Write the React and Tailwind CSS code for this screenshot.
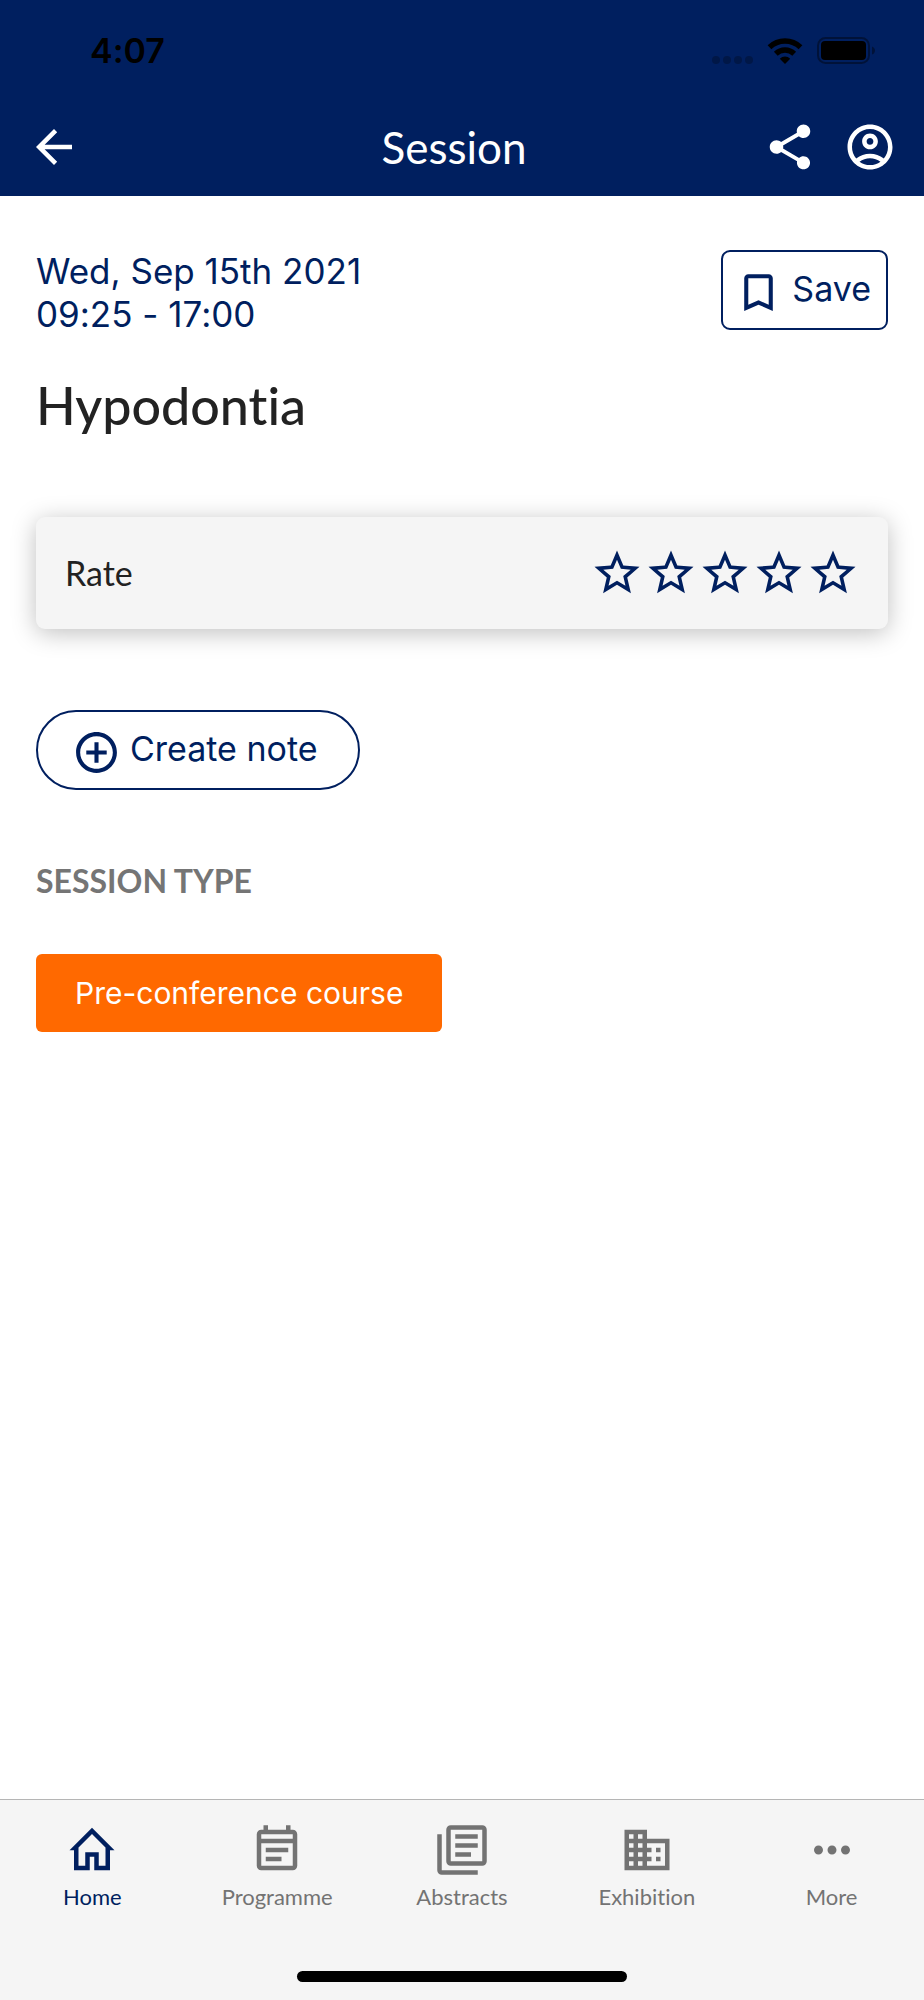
import { useState } from "react";
import {
  MdAddCircleOutline,
  MdArrowBack,
  MdBookmarkBorder,
  MdDomain,
  MdMoreHoriz,
  MdOutlineAccountCircle,
  MdOutlineEventNote,
  MdShare,
} from "react-icons/md";

function HomeIcon({ className }) {
  return (
    <svg className={className} viewBox="0 0 24 24" fill="currentColor" fillRule="evenodd">
      <path d="M12 2.1L2 12.1H4V21H11V15H13V21H20V12.1H22L12 2.1ZM12 4.9L18 10.9V19H15V13H9V19H6V10.9L12 4.9Z" />
    </svg>
  );
}

function AbstractsIcon({ className }) {
  return (
    <svg className={className} viewBox="0 0 24 24" fill="currentColor">
      <path d="M16 15H9V13H16V15M19 11H9V9H19V11M19 7H9V5H19V7M3 5V21H19V23H3A2 2 0 0 1 1 21V5H3M21 1A2 2 0 0 1 23 3V17C23 18.11 22.11 19 21 19H7A2 2 0 0 1 5 17V3C5 1.89 5.89 1 7 1H21M7 3V17H21V3H7Z" />
    </svg>
  );
}

function StarIcon({ className }) {
  return (
    <svg className={className} viewBox="0 0 24 24" fill="currentColor">
      <path d="M12 15.39L8.24 17.66L9.23 13.38L5.91 10.5L10.29 10.13L12 6.09L13.71 10.13L18.09 10.5L14.77 13.38L15.76 17.66M22 9.24L14.81 8.63L12 2L9.19 8.63L2 9.24L7.45 13.97L5.82 21L12 17.27L18.18 21L16.54 13.97L22 9.24Z" />
    </svg>
  );
}

const tabs = [
  { label: "Home", icon: HomeIcon },
  { label: "Programme", icon: MdOutlineEventNote },
  { label: "Abstracts", icon: AbstractsIcon },
  { label: "Exhibition", icon: MdDomain },
  { label: "More", icon: MdMoreHoriz },
];

function StatusBar() {
  return (
    <div className="h-[98px] pt-1 flex items-center justify-between pl-[90px] pr-12 text-black">
      <span className="font-['Inter',sans-serif] font-semibold text-[34px] leading-[48px]">4:07</span>
      <div className="flex items-center">
        <svg className="w-[42px] h-[26px]" viewBox="0 0 42 26" fill="#000000" fillOpacity="0.25">
          <circle cx="4" cy="22" r="4" />
          <circle cx="15" cy="22" r="4" />
          <circle cx="26" cy="22" r="4" />
          <circle cx="37" cy="22" r="4" />
        </svg>
        <svg className="ml-[13px] w-9 h-[26px]" viewBox="0 0 36 26" fill="none" stroke="#000000">
          <path d="M2.5 9.2A22.3 22.3 0 0 1 33.5 9.2" strokeWidth="5.4" />
          <path d="M8.8 15.8A13.2 13.2 0 0 1 27.2 15.8" strokeWidth="5.4" />
          <path d="M18 26L12.8 20.7A7.4 7.4 0 0 1 23.2 20.7Z" fill="#000000" stroke="none" />
        </svg>
        <svg className="ml-[14px] w-[59px] h-[28px]" viewBox="0 0 59 28">
          <rect x="1" y="1" width="51" height="25" rx="7.5" fill="none" stroke="#000000" strokeOpacity="0.4" strokeWidth="2" />
          <rect x="4" y="4" width="45" height="19" rx="4" fill="#000000" />
          <path d="M55 9.5C57 10 58 12 58 13.5S57 17 55 17.5Z" fill="#000000" fillOpacity="0.4" />
        </svg>
      </div>
    </div>
  );
}

function Header() {
  return (
    <header className="bg-[#001f5f]">
      <StatusBar />
      <div className="h-[98px] grid grid-cols-3 items-center px-[27px] text-white">
        <button aria-label="Back" className="justify-self-start">
          <MdArrowBack className="w-[54px] h-[54px]" />
        </button>
        <h1 className="pr-4 text-center text-[44px] leading-[54px]">Session</h1>
        <div className="justify-self-end flex gap-[26px]">
          <button aria-label="Share">
            <MdShare className="w-[54px] h-[54px]" />
          </button>
          <button aria-label="Account">
            <MdOutlineAccountCircle className="w-[54px] h-[54px]" />
          </button>
        </div>
      </div>
    </header>
  );
}

function RateCard() {
  const [, setRating] = useState(0);
  return (
    <section className="mt-[78px] h-28 flex items-center justify-between pl-[29px] pr-7 rounded-[9px] bg-[#f5f5f5] shadow-[0_4px_24px_rgba(0,0,0,0.25)]">
      <h3 className="text-[34px] leading-[44px]">Rate</h3>
      <div className="flex text-[#001f5f]">
        {[1, 2, 3, 4, 5].map((n) => (
          <button key={n} aria-label={`Rate ${n}`} onClick={() => setRating(n)}>
            <StarIcon className="w-[54px] h-[54px]" />
          </button>
        ))}
      </div>
    </section>
  );
}

function TabBar() {
  return (
    <nav className="border-t border-[#b5b5b5] bg-[#f5f5f5] pt-[23px] pb-[18px]">
      <div className="grid grid-cols-5">
        {tabs.map(({ label, icon: TabIcon }) => (
          <a
            key={label}
            href="#"
            className={`flex flex-col items-center gap-[6px] text-[22px] leading-[28px] ${label === "Home" ? "text-[#001f5f]" : "text-[#737373]"}`}
          >
            <TabIcon className="w-[54px] h-[54px]" />
            {label}
          </a>
        ))}
      </div>
      <div className="mx-auto mt-[60px] w-[330px] h-[11px] rounded-full bg-black" />
    </nav>
  );
}

export default function App() {
  return (
    <div className="min-h-screen flex flex-col bg-white font-['Lato',sans-serif] [font-variant-ligatures:none] text-[#222222]">
      <Header />
      <main className="flex-1 px-9 pt-[54px]">
        <div className="flex items-start justify-between font-['Inter',sans-serif] leading-[43px] text-[#001f5f]">
          <p className="text-[35px]">
            Wed, Sep 15th 2021
            <br />
            09:25 - 17:00
          </p>
          <button className="h-20 pb-1 flex items-center gap-[9px] pl-[11px] pr-[15px] border-2 border-[#001f5f] rounded-[9px] text-[34px]">
            <MdBookmarkBorder className="mt-2 w-[49px] h-[49px]" />
            Save
          </button>
        </div>
        <h2 className="mt-[35px] text-[52px] leading-[68px] font-medium">Hypodontia</h2>
        <RateCard />
        <button className="mt-[81px] h-20 pb-1 flex items-center gap-[9px] pl-[34px] pr-10 border-2 border-[#001f5f] rounded-full font-['Inter',sans-serif] text-[34px] text-[#001f5f]">
          <MdAddCircleOutline className="mt-2 w-[49px] h-[49px]" />
          Create note
        </button>
        <h3 className="mt-[71px] text-[32px] leading-[40px] font-bold text-[#757575]">SESSION TYPE</h3>
        <div className="mt-[53px] w-fit h-[78px] flex items-center px-[39px] rounded-md bg-[#ff6900] font-['Inter',sans-serif] text-[30px] text-white">
          Pre-conference course
        </div>
      </main>
      <TabBar />
    </div>
  );
}
